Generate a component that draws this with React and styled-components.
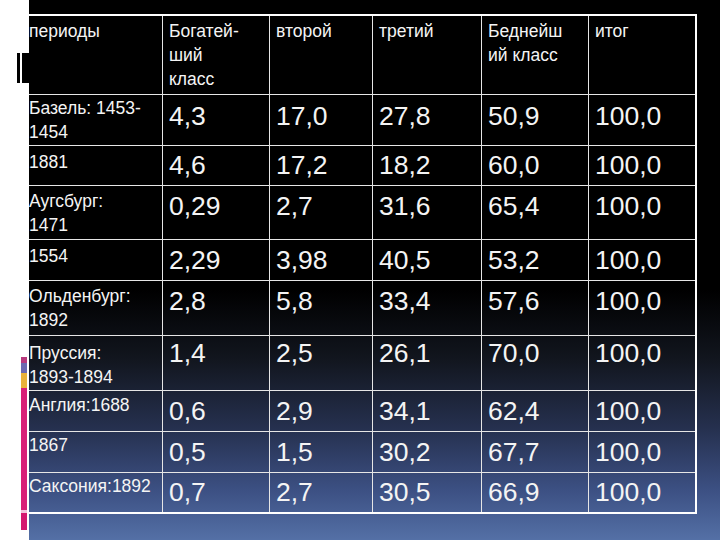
import styled, { createGlobalStyle } from "styled-components";

const GlobalStyle = createGlobalStyle`
  html, body {
    margin: 0;
    padding: 0;
    background: #fff;
  }
  body {
    font-family: "Liberation Sans", Arial, sans-serif;
  }
`;

const Page = styled.div`
  width: 720px;
  height: 540px;
  display: flex;
  overflow: hidden;
`;

const Margin = styled.div`
  width: 29px;
  flex: none;
  background: #fff;
  display: flex;
  flex-direction: column;
  align-items: flex-end;
`;

const Clip = styled.div`
  margin-top: 53px;
  width: 12px;
  height: 30px;
  display: flex;
  gap: 2px;
`;

const ClipBar = styled.div`
  width: ${p => p.w}px;
  background: #000;
`;

const Ribbon = styled.div`
  margin-top: 274px;
  margin-right: 2px;
  width: 6px;
  display: flex;
  flex-direction: column;
`;

const RibbonPart = styled.div`
  height: ${p => p.h}px;
  background: ${p => p.c};
`;

const Slide = styled.div`
  flex: 1;
  overflow: hidden;
  padding-top: 14px;
  background: linear-gradient(
    to bottom,
    #000 0px,
    #000 290px,
    #12161f 360px,
    #263150 430px,
    #3c5083 490px,
    #5470a6 540px
  );
`;

const Grid = styled.div`
  margin-left: -8px;
  display: grid;
  grid-template-columns: 140px 107px 103px 109px 107px 106px;
  grid-template-rows: 79px 51px 40px 54px 41px 55px 55px 41px 41px 39px;
  width: max-content;
  border: 2px solid #fff;
  color: #f4f4f4;
`;

const Cell = styled.div`
  box-sizing: border-box;
  border-right: ${p => (p.last ? "none" : "1px solid #e6e6e6")};
  border-bottom: ${p => (p.bottom ? "none" : "1px solid #e6e6e6")};
  padding: ${p => p.pad}px 2px 0 6px;
  font-size: ${p => (p.num ? 26.5 : 17.5)}px;
  line-height: ${p => (p.num ? 30 : 24)}px;
  white-space: nowrap;
`;

const headers = [
  ["Богатей-", "ший", "класс"],
  ["второй"],
  ["третий"],
  ["Беднейш", "ий класс"],
  ["итог"],
];

const rows = [
  { label: ["Базель: 1453-", "1454"], lp: 1, np: 6, v: ["4,3", "17,0", "27,8", "50,9", "100,0"] },
  { label: ["1881"], lp: 4, np: 4, v: ["4,6", "17,2", "18,2", "60,0", "100,0"] },
  { label: ["Аугсбург:", "1471"], lp: 3, np: 5, v: ["0,29", "2,7", "31,6", "65,4", "100,0"] },
  { label: ["1554"], lp: 4, np: 5, v: ["2,29", "3,98", "40,5", "53,2", "100,0"] },
  { label: ["Ольденбург:", "1892"], lp: 3, np: 5, v: ["2,8", "5,8", "33,4", "57,6", "100,0"] },
  { label: ["Пруссия:", "1893-1894"], lp: 5, np: 2, v: ["1,4", "2,5", "26,1", "70,0", "100,0"] },
  { label: ["Англия:1688"], lp: 2, np: 5, v: ["0,6", "2,9", "34,1", "62,4", "100,0"] },
  { label: ["1867"], lp: 1, np: 5, v: ["0,5", "1,5", "30,2", "67,7", "100,0"] },
  { label: ["Саксония:1892"], lp: 1, np: 4, v: ["0,7", "2,7", "30,5", "66,9", "100,0"] },
];

const Lines = ({ parts }) =>
  parts.map((t, i) => (
    <span key={i}>
      {i > 0 && <br />}
      {t}
    </span>
  ));

export default function App() {
  return (
    <>
      <GlobalStyle />
      <Page>
        <Margin>
          <Clip>
            <ClipBar w={3} />
            <ClipBar w={7} />
          </Clip>
          <Ribbon>
            <RibbonPart h={6} c="#b8397e" />
            <RibbonPart h={10} c="#6c69b0" />
            <RibbonPart h={15} c="#e9b13a" />
            <RibbonPart h={122} c="#d81f78" />
            <RibbonPart h={3} c="#f2c5dc" />
            <RibbonPart h={17} c="#d4186f" />
          </Ribbon>
        </Margin>
        <Slide>
          <Grid>
            <Cell pad={3}>периоды</Cell>
            {headers.map((h, i) => (
              <Cell key={i} pad={3} last={i === headers.length - 1}>
                <Lines parts={h} />
              </Cell>
            ))}
            {rows.map((r, ri) => {
              const bottom = ri === rows.length - 1;
              return [
                <Cell key={`l${ri}`} pad={r.lp} bottom={bottom}>
                  <Lines parts={r.label} />
                </Cell>,
                ...r.v.map((v, ci) => (
                  <Cell
                    key={`${ri}-${ci}`}
                    num
                    pad={r.np}
                    bottom={bottom}
                    last={ci === r.v.length - 1}
                  >
                    {v}
                  </Cell>
                )),
              ];
            })}
          </Grid>
        </Slide>
      </Page>
    </>
  );
}
